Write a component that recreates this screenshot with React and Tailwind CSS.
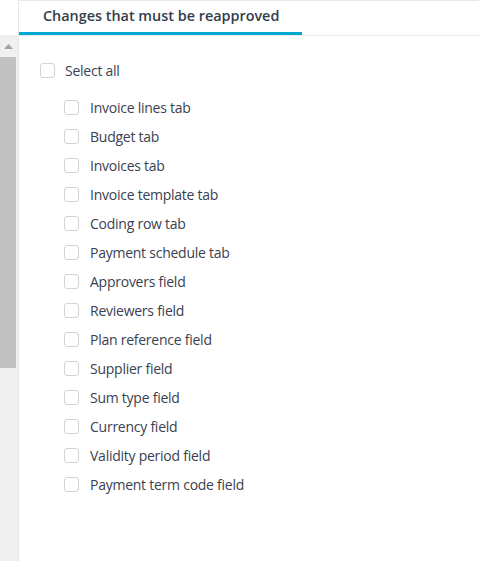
import React from "react";

const items = [
  "Invoice lines tab",
  "Budget tab",
  "Invoices tab",
  "Invoice template tab",
  "Coding row tab",
  "Payment schedule tab",
  "Approvers field",
  "Reviewers field",
  "Plan reference field",
  "Supplier field",
  "Sum type field",
  "Currency field",
  "Validity period field",
  "Payment term code field",
];

function Box() {
  return <span className="block w-[15px] h-[15px] shrink-0 rounded-[3px] border border-[#d3d3d3] bg-white" />;
}

export default function App() {
  return (
    <div
      className="flex w-[479px] h-[561px] bg-white overflow-hidden text-[#3a4150]"
      style={{ fontFamily: '"Open Sans", "Noto Sans", sans-serif' }}
    >
      <div className="flex flex-col w-[18px] shrink-0">
        <div className="h-[35px] bg-white" />
        <div className="flex-1 bg-[#f0f0f0] flex flex-col">
          <div className="h-[22px] w-[16px] flex items-center justify-center">
            <svg width="9" height="5" viewBox="0 0 9 5">
              <path d="M0 5 L4.5 0 L9 5 Z" fill="#a3a3a3" />
            </svg>
          </div>
          <div className="h-[311px] w-[16px] bg-[#c1c1c1]" />
        </div>
      </div>
      <div className="flex-1 flex flex-col border-l border-[#e6e6e6]">
        <div className="h-[36px] border-t border-b border-[#e8e8e8] flex">
          <div className="w-[283px] h-[34px] border-b-[3px] border-[#00a9cf] pl-[24px] flex items-center">
            <span className="text-[14.4px] font-semibold text-[#333d4b] leading-none">Changes that must be reapproved</span>
          </div>
        </div>
        <div className="pl-[21px] pt-[20px]">
          <div className="h-[29px] flex items-center gap-[10px]">
            <Box />
            <span className="text-[14px] leading-none tracking-[-0.25px]">Select all</span>
          </div>
          <div className="mt-[8px] pl-[24px] flex flex-col">
            {items.map((t) => (
              <div key={t} className="h-[29px] flex items-center gap-[11px]">
                <Box />
                <span className="text-[14px] leading-none tracking-[-0.25px]">{t}</span>
              </div>
            ))}
          </div>
        </div>
      </div>
    </div>
  );
}
